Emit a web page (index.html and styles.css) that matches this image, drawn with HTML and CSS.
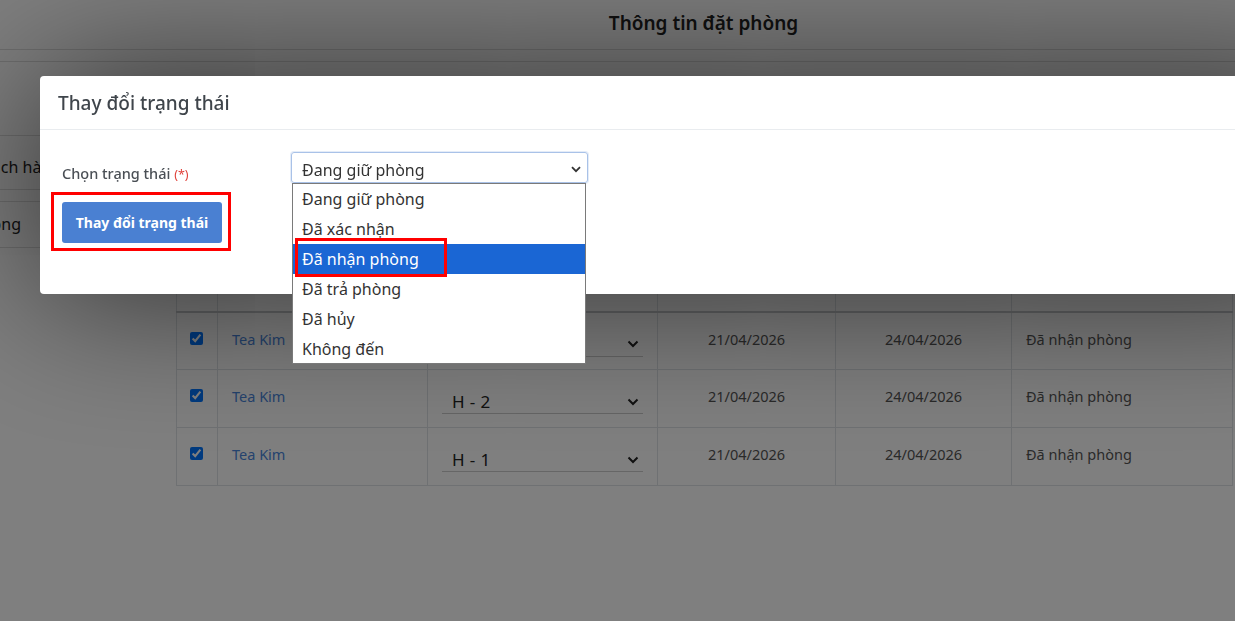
FILE: index.html
```html
<!DOCTYPE html>
<html lang="vi">
<head>
  <meta charset="UTF-8">
  <meta name="viewport" content="width=device-width, initial-scale=1.0">
  <title>Thông tin đặt phòng</title>
  <link rel="stylesheet" href="styles.css">
</head>
<body>
  <div class="page">
    <header class="page-head">
      <h1>Thông tin đặt phòng</h1>
    </header>
    <div class="page-bar"></div>

    <div class="page-main">
      <aside class="side-menu">
        <div class="side-item first">Khách hàng</div>
        <div class="side-item">Phòng</div>
      </aside>

      <section class="booking-list">
        <table class="booking-table">
          <colgroup>
            <col style="width: 41px">
            <col style="width: 210px">
            <col style="width: 230px">
            <col style="width: 178px">
            <col style="width: 176px">
            <col>
          </colgroup>
          <thead>
            <tr>
              <th><input type="checkbox" checked></th>
              <th>Họ tên</th>
              <th>Phòng</th>
              <th class="center">Ngày đến</th>
              <th class="center">Ngày đi</th>
              <th>Trạng thái</th>
            </tr>
          </thead>
          <tbody>
            <tr>
              <td><input type="checkbox" checked></td>
              <td><a href="#" class="guest">Tea Kim</a></td>
              <td>
                <div class="room-select">
                  <span>H - 3</span>
                  <svg width="12" height="8" viewBox="0 0 12 8"><path d="M1.5 1.5 6 6l4.5-4.5" fill="none" stroke="#222" stroke-width="2"/></svg>
                </div>
              </td>
              <td class="center">21/04/2026</td>
              <td class="center">24/04/2026</td>
              <td>Đã nhận phòng</td>
            </tr>
            <tr>
              <td><input type="checkbox" checked></td>
              <td><a href="#" class="guest">Tea Kim</a></td>
              <td>
                <div class="room-select">
                  <span>H - 2</span>
                  <svg width="12" height="8" viewBox="0 0 12 8"><path d="M1.5 1.5 6 6l4.5-4.5" fill="none" stroke="#222" stroke-width="2"/></svg>
                </div>
              </td>
              <td class="center">21/04/2026</td>
              <td class="center">24/04/2026</td>
              <td>Đã nhận phòng</td>
            </tr>
            <tr>
              <td><input type="checkbox" checked></td>
              <td><a href="#" class="guest">Tea Kim</a></td>
              <td>
                <div class="room-select">
                  <span>H - 1</span>
                  <svg width="12" height="8" viewBox="0 0 12 8"><path d="M1.5 1.5 6 6l4.5-4.5" fill="none" stroke="#222" stroke-width="2"/></svg>
                </div>
              </td>
              <td class="center">21/04/2026</td>
              <td class="center">24/04/2026</td>
              <td>Đã nhận phòng</td>
            </tr>
          </tbody>
        </table>
      </section>
    </div>
  </div>

  <!-- change status dialog -->
  <div class="backdrop"></div>
  <div class="modal">
    <div class="modal-header">
      <h2>Thay đổi trạng thái</h2>
    </div>
    <div class="modal-body">
      <div class="form-row">
        <label class="form-label">Chọn trạng thái <span class="required">(*)</span></label>
        <div class="status-select">
          <div class="select-box">
            <span>Đang giữ phòng</span>
            <svg width="10" height="7" viewBox="0 0 10 7"><path d="M1 1.2 5 5.2l4-4" fill="none" stroke="#333" stroke-width="1.8"/></svg>
          </div>
          <ul class="select-options">
            <li>Đang giữ phòng</li>
            <li>Đã xác nhận</li>
            <li class="active marked">Đã nhận phòng</li>
            <li>Đã trả phòng</li>
            <li>Đã hủy</li>
            <li>Không đến</li>
          </ul>
        </div>
      </div>
      <div class="form-actions">
        <span class="marked-wrap">
          <button class="btn-primary">Thay đổi trạng thái</button>
        </span>
      </div>
    </div>
  </div>
</body>
</html>
```

FILE: styles.css
```css
*,
*::before,
*::after {
  margin: 0;
  padding: 0;
  box-sizing: border-box;
}

body {
  font-family: "Noto Sans", "Open Sans", sans-serif;
  background: white;
  color: #333;
  overflow: hidden;
  height: 100vh;
}

/* page under the dialog */
.page-head {
  height: 50px;
  border-bottom: 1px solid #ddd;
  padding-left: 172px;
  text-align: center;
}

.page-head h1 {
  font-size: 19px;
  font-weight: 600;
  line-height: 46px;
  color: #222;
}

.page-bar {
  height: 12px;
  border-bottom: 1px solid #ddd;
}

.page-main {
  display: flex;
}

.side-menu {
  flex: 0 0 196px;
  margin-left: -40px;
  margin-top: 73px;
}

.side-item {
  padding: 0 12px;
  font-size: 16px;
  line-height: 24px;
  color: #222;
  border-top: 1px solid #ddd;
  border-bottom: 1px solid #ddd;
}

.side-item.first {
  padding-top: 19px;
  padding-bottom: 10px;
  margin-bottom: 11px;
}

.side-item + .side-item {
  padding-top: 10px;
  padding-bottom: 11px;
}

.booking-list {
  padding-left: 20px;
  margin-top: 208px;
}

.booking-table {
  width: 1057px;
  table-layout: fixed;
  border-collapse: collapse;
  font-size: 14.5px;
  color: #555;
}

.booking-table th,
.booking-table td {
  border: 1px solid #dee2e6;
  vertical-align: top;
  text-align: left;
  padding: 14px 14px 0;
  line-height: 24px;
}

.booking-table th {
  height: 41px;
  padding-top: 0;
  line-height: 20px;
  border-bottom: 2px solid #c6c9cc;
  font-weight: 600;
}

.booking-table td {
  height: 58px;
}

.booking-table .center {
  text-align: center;
}

.booking-table input[type="checkbox"] {
  width: 13px;
  height: 13px;
  margin: 4px 0 0 -1px;
}

.guest {
  color: #4a86dc;
  text-decoration: none;
}

.room-select {
  display: flex;
  align-items: center;
  justify-content: space-between;
  padding: 6px 4px 0 10px;
  height: 30px;
  border-bottom: 1px solid #ccc;
  font-size: 17px;
  letter-spacing: 0.4px;
  color: #222;
}

/* dialog */
.backdrop {
  position: fixed;
  inset: 0;
  background: rgba(0, 0, 0, 0.5);
}

.modal {
  position: fixed;
  left: 40px;
  top: 76px;
  width: 1300px;
  height: 218px;
  background: white;
  border-radius: 4px;
  box-shadow: 0 0 150px rgba(0, 0, 0, 0.65);
}

.modal-header {
  height: 54px;
  padding: 0 18px;
  display: flex;
  align-items: center;
  border-bottom: 1px solid #e9ecef;
}

.modal-header h2 {
  font-size: 19px;
  font-weight: 500;
  color: #3f454b;
}

.modal-body {
  padding: 22px 22px;
}

.form-row {
  display: flex;
  height: 31px;
}

.form-label {
  flex: 0 0 229px;
  padding-top: 9px;
  font-size: 14.5px;
  line-height: 24px;
  font-weight: 500;
  color: #4a4f55;
}

.required {
  color: #e0413a;
  font-size: 12.5px;
  font-weight: 400;
}

.status-select {
  position: relative;
  width: 297px;
}

.select-box {
  height: 31px;
  display: flex;
  align-items: center;
  justify-content: space-between;
  padding: 4px 6px 0 10px;
  border: 1px solid #a9c2e8;
  border-radius: 3px;
  box-shadow: 0 0 0 1px #e4ecf8;
  font-size: 16px;
  color: #333;
}

.select-options {
  position: absolute;
  top: 31px;
  left: 1px;
  width: 294px;
  height: 181px;
  list-style: none;
  background: white;
  border: 1px solid #7a7a7a;
  z-index: 2;
}

.select-options li {
  height: 30px;
  line-height: 30px;
  padding-left: 9px;
  font-size: 16px;
  color: #333;
}

.select-options li.active {
  background: #1a66d4;
  color: white;
}

/* red highlight frames */
.marked {
  position: relative;
}

.marked::after {
  content: '';
  position: absolute;
  top: -6px;
  left: 2px;
  width: 152px;
  height: 39px;
  border: 3px solid #f00;
}

.form-actions {
  margin-top: 19px;
}

.marked-wrap {
  position: relative;
  display: inline-block;
  vertical-align: top;
}

.marked-wrap::after {
  content: '';
  position: absolute;
  top: -10px;
  right: -9px;
  bottom: -8px;
  left: -11px;
  border: 3px solid #f00;
}

.btn-primary {
  display: block;
  width: 160px;
  height: 41px;
  background: #4a80d2;
  color: white;
  border: none;
  border-radius: 3px;
  font-family: inherit;
  font-size: 14px;
  font-weight: 700;
}
```
